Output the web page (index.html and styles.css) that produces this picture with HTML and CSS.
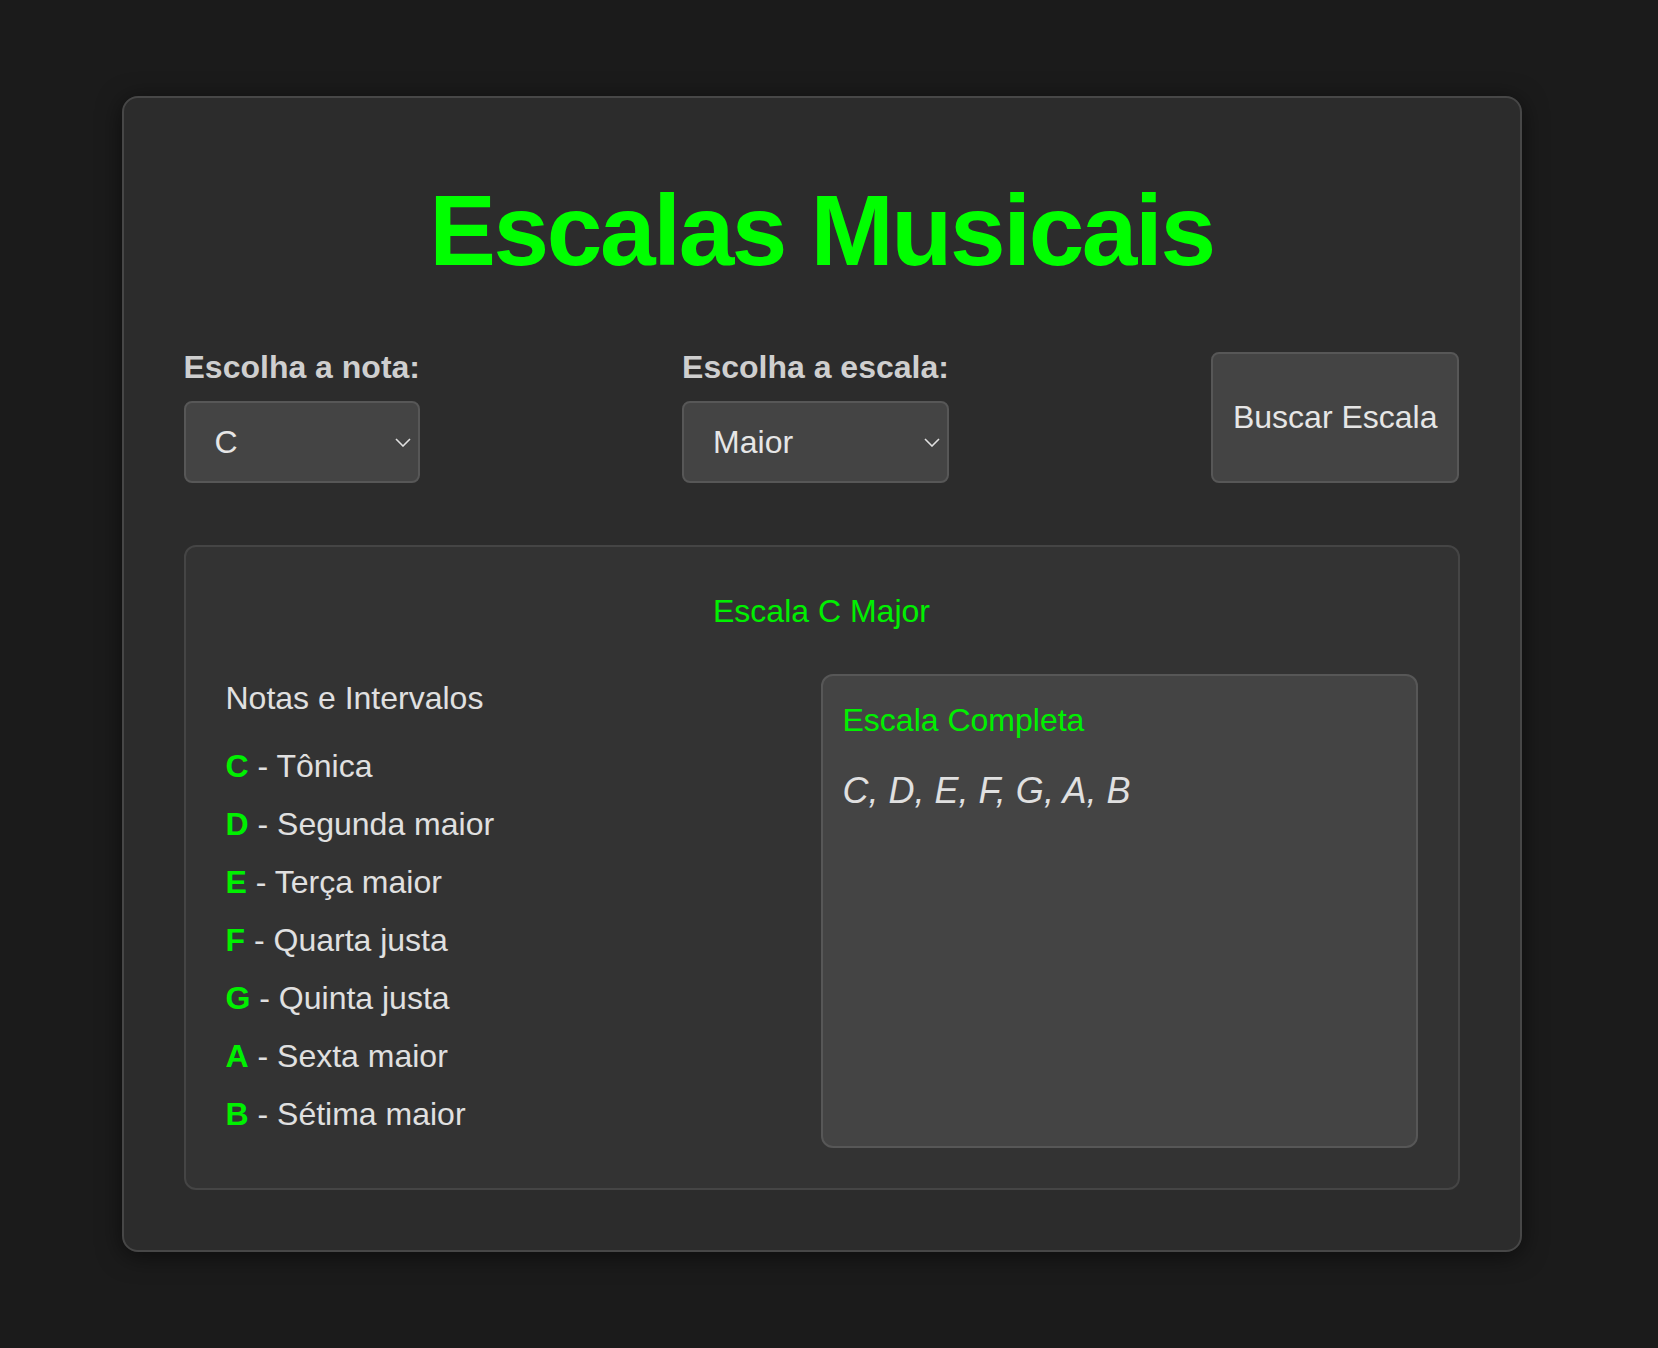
FILE: index.html
```html
<!DOCTYPE html>
<html lang="pt-BR">
<head>
<meta charset="UTF-8">
<title>Escalas Musicais</title>
<link rel="stylesheet" href="styles.css">
</head>
<body>
<div class="container">
  <h1 class="title">Escalas Musicais</h1>
  <div class="controls">
    <div class="field">
      <label class="field-label" for="nota">Escolha a nota:</label>
      <div class="select-wrap">
        <select id="nota" class="field-select">
          <option>C</option><option>C#</option><option>D</option><option>D#</option>
          <option>E</option><option>F</option><option>F#</option><option>G</option>
          <option>G#</option><option>A</option><option>A#</option><option>B</option>
        </select>
        <svg class="chevron" width="16" height="9" viewBox="0 0 16 9"><path d="M1 1 L8 8 L15 1" fill="none" stroke="#e0e0e0" stroke-width="1.6"/></svg>
      </div>
    </div>
    <div class="field">
      <label class="field-label" for="escala">Escolha a escala:</label>
      <div class="select-wrap">
        <select id="escala" class="field-select">
          <option>Maior</option><option>Menor</option>
        </select>
        <svg class="chevron" width="16" height="9" viewBox="0 0 16 9"><path d="M1 1 L8 8 L15 1" fill="none" stroke="#e0e0e0" stroke-width="1.6"/></svg>
      </div>
    </div>
    <button class="search-btn" type="button">Buscar Escala</button>
  </div>
  <section class="result">
    <h2 class="result-title">Escala C Major</h2>
    <div class="result-grid">
      <div class="intervals">
        <h3 class="intervals-title">Notas e Intervalos</h3>
        <ul class="interval-list">
          <li class="interval-item"><strong class="note">C</strong> - Tônica</li>
          <li class="interval-item"><strong class="note">D</strong> - Segunda maior</li>
          <li class="interval-item"><strong class="note">E</strong> - Terça maior</li>
          <li class="interval-item"><strong class="note">F</strong> - Quarta justa</li>
          <li class="interval-item"><strong class="note">G</strong> - Quinta justa</li>
          <li class="interval-item"><strong class="note">A</strong> - Sexta maior</li>
          <li class="interval-item"><strong class="note">B</strong> - Sétima maior</li>
        </ul>
      </div>
      <div class="full-scale">
        <h4 class="full-scale-title">Escala Completa</h4>
        <p class="full-scale-notes">C, D, E, F, G, A, B</p>
      </div>
    </div>
  </section>
</div>
</body>
</html>
```

FILE: styles.css
```css
* { box-sizing: border-box; }

html, body {
  background: #1b1b1b;
}

body {
  margin: 0;
  padding: 96px 15px 96px 0;
  font-family: "Liberation Sans", Arial, sans-serif;
  font-size: 32px;
  line-height: 1.5;
  color: #e0e0e0;
}

.container {
  width: 1400px;
  margin: 0 auto;
  background: #2c2c2c;
  border: 2px solid #474747;
  border-radius: 16px;
  padding: 60px;
  box-shadow: 0 4px 24px rgba(0, 0, 0, 0.55);
}

.title {
  margin: 0 0 49px;
  text-align: center;
  font-size: 100px;
  font-weight: bold;
  color: #00ff00;
  line-height: 145px;
  letter-spacing: -2.4px;
}

.controls {
  display: flex;
  justify-content: space-between;
  align-items: stretch;
}

.field {
  display: flex;
  flex-direction: column;
}

.field-label {
  display: block;
  font-weight: bold;
  color: #cfcfcf;
  line-height: 30px;
  margin-bottom: 18.8px;
}

.select-wrap {
  position: relative;
}

.field-select {
  -webkit-appearance: none;
  appearance: none;
  width: 100%;
  height: 82px;
  padding: 0 40px 0 29px;
  font-family: inherit;
  font-size: 32px;
  color: #e6e6e6;
  background: #444444;
  border: 2px solid #575757;
  border-radius: 8px;
  outline: none;
}

.chevron {
  position: absolute;
  right: 9px;
  top: 37px;
  pointer-events: none;
}

.search-btn {
  font-family: inherit;
  font-size: 32px;
  color: #e6e6e6;
  background: #444444;
  border: 2px solid #575757;
  border-radius: 8px;
  padding: 0 20px;
  cursor: pointer;
}

.result {
  margin-top: 62px;
  background: #333333;
  border: 2px solid #454545;
  border-radius: 12px;
  padding: 40px;
}

.result-title {
  margin: 0 0 39px;
  text-align: center;
  font-size: 32px;
  font-weight: normal;
  color: #00f000;
}

.result-grid {
  display: grid;
  grid-template-columns: 1fr 597px;
}

.intervals-title {
  margin: 0;
  font-size: 32px;
  font-weight: normal;
  color: #e0e0e0;
}

.interval-list {
  list-style: none;
  margin: 15px 0 5px;
  padding: 0;
}

.interval-item {
  padding: 5px 0;
}

.note {
  color: #00f000;
}

.full-scale {
  background: #444444;
  border: 2px solid #575757;
  border-radius: 12px;
  padding: 20px;
}

.full-scale-title {
  margin: 0;
  font-size: 32px;
  font-weight: normal;
  color: #00f000;
}

.full-scale-notes {
  margin: 20px 0 0;
  font-size: 36px;
  font-style: italic;
  color: #e0e0e0;
}
```
